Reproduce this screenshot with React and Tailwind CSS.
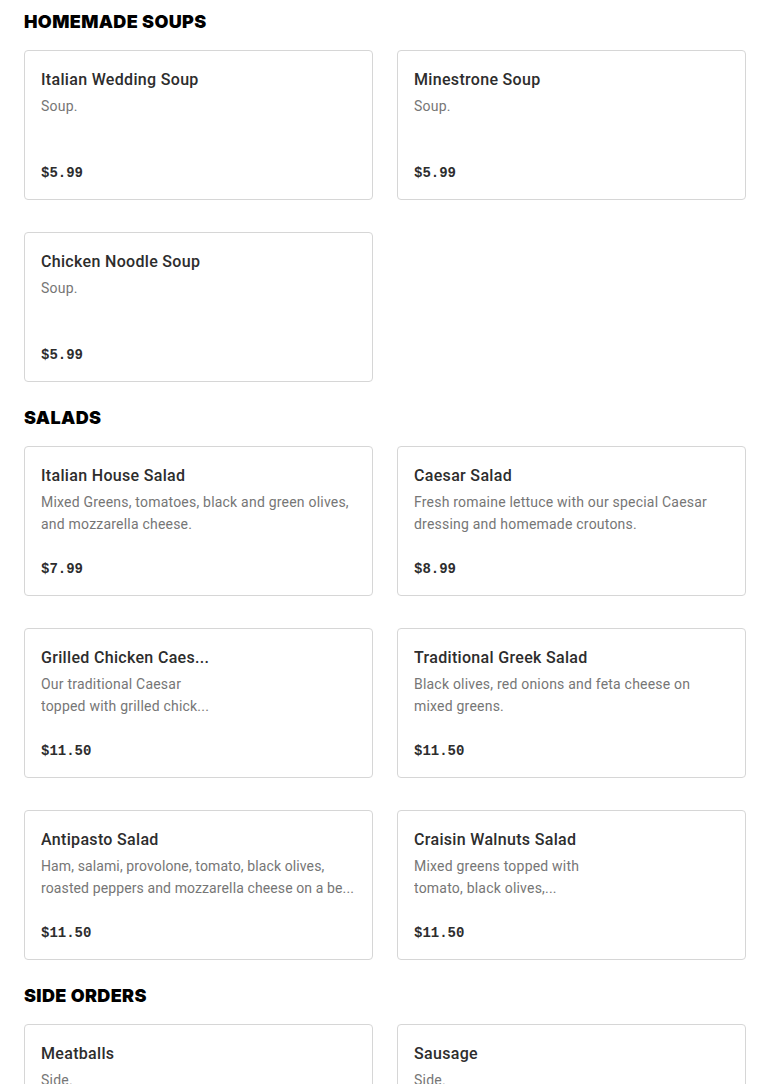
const sections = [
  {
    title: 'HOMEMADE SOUPS',
    items: [
      { name: 'Italian Wedding Soup', desc: 'Soup.', price: '$5.99' },
      { name: 'Minestrone Soup', desc: 'Soup.', price: '$5.99' },
      { name: 'Chicken Noodle Soup', desc: 'Soup.', price: '$5.99' },
    ],
  },
  {
    title: 'SALADS',
    items: [
      {
        name: 'Italian House Salad',
        desc: 'Mixed Greens, tomatoes, black and green olives, and mozzarella cheese.',
        price: '$7.99',
      },
      {
        name: 'Caesar Salad',
        desc: 'Fresh romaine lettuce with our special Caesar dressing and homemade croutons.',
        price: '$8.99',
      },
      {
        name: 'Grilled Chicken Caes...',
        desc: 'Our traditional Caesar topped with grilled chick...',
        price: '$11.50',
        image: true,
      },
      {
        name: 'Traditional Greek Salad',
        desc: 'Black olives, red onions and feta cheese on mixed greens.',
        price: '$11.50',
      },
      {
        name: 'Antipasto Salad',
        desc: 'Ham, salami, provolone, tomato, black olives, roasted peppers and mozzarella cheese on a be...',
        price: '$11.50',
        tight: true,
      },
      {
        name: 'Craisin Walnuts Salad',
        desc: 'Mixed greens topped with tomato, black olives,...',
        price: '$11.50',
        image: true,
      },
    ],
  },
  {
    title: 'SIDE ORDERS',
    items: [
      { name: 'Meatballs', desc: 'Side.', price: '$5.99' },
      { name: 'Sausage', desc: 'Side.', price: '$5.99' },
    ],
  },
]

function ItemCard({ item }) {
  return (
    <div className="flex h-[150px] rounded border border-[#d6d6d6] bg-white p-4">
      <div className="flex min-w-0 flex-1 flex-col">
        <h3 className="truncate pt-px text-base leading-6 font-medium tracking-[0.02em] text-[#2d2d2d]">
          {item.name}
        </h3>
        <p
          className={
            item.tight
              ? 'mt-[3px] line-clamp-2 min-h-[44px] text-sm leading-[22px] tracking-[0.008em] text-[#767676]'
              : 'mt-[3px] line-clamp-2 min-h-[44px] text-sm leading-[22px] tracking-[0.015em] text-[#767676]'
          }
        >
          {item.desc}
        </p>
        <span className="mt-6 font-['Liberation_Mono',monospace] text-sm leading-5 font-bold text-[#2d2d2d]">
          {item.price}
        </span>
      </div>
      {/* photo slot, left empty */}
      {item.image && <div className="ml-4 w-[120px] shrink-0" />}
    </div>
  )
}

export default function App() {
  return (
    <div className="min-h-screen bg-white px-6 pt-[10px] pb-10 font-['Roboto',sans-serif]">
      {sections.map((section, i) => (
        <section key={section.title} className={i > 0 ? 'mt-6' : ''}>
          <h2 className="mb-4 font-['Inter',sans-serif] text-lg leading-6 font-black tracking-[0.02em] text-black">
            {section.title}
          </h2>
          <div className="grid grid-cols-2 gap-x-6 gap-y-8">
            {section.items.map((item) => (
              <ItemCard key={item.name} item={item} />
            ))}
          </div>
        </section>
      ))}
    </div>
  )
}
